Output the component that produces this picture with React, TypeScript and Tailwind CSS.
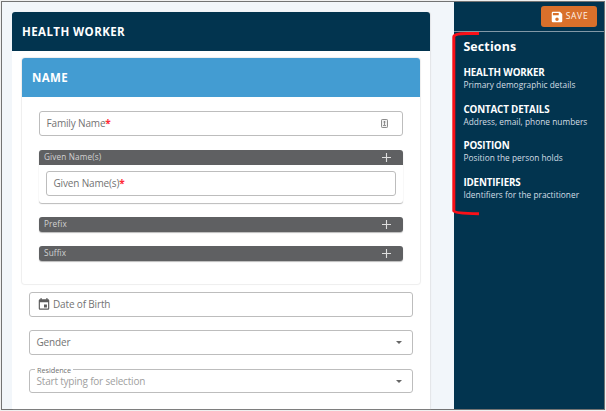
import React from "react";

type FieldProps = {
  label: string;
  required?: boolean;
  leading?: React.ReactNode;
  trailing?: React.ReactNode;
};

function Field({ label, required, leading, trailing }: FieldProps) {
  return (
    <div className="flex h-[25px] items-center rounded-[3px] border border-[#bdbdbd] bg-white px-[6.5px] text-[10px] tracking-[-0.16px] text-[#737373]">
      {leading}
      <span className="whitespace-nowrap">
        {label}
        {required && <span className="font-bold text-[#ff2a35]">*</span>}
      </span>
      {trailing}
    </div>
  );
}

function GroupBar({ label, open }: { label: string; open?: boolean }) {
  return (
    <div
      className={
        "flex h-[15px] items-center justify-between pr-[12px] pl-[5px] text-[8.2px] tracking-[0.15px] text-[#d2d2d2] bg-[#5f6062] " +
        (open ? "rounded-t-[3px]" : "rounded-[3px] shadow-[0_1px_1px_#bbb]")
      }
    >
      <span>{label}</span>
      <svg className="size-[9px]" viewBox="0 0 9 9" stroke="#dedede" strokeWidth="1.1">
        <path d="M4.5 0v9M0 4.5h9" />
      </svg>
    </div>
  );
}

function Caret() {
  return (
    <svg className="mr-[4px] ml-auto h-[3px] w-[6px]" viewBox="0 0 6 3" fill="#666">
      <path d="M0 0h6L3 3z" />
    </svg>
  );
}

function CalendarIcon() {
  return (
    <svg className="mr-[2.5px] size-[14px] -translate-y-[0.5px]" viewBox="0 0 24 24" fill="#5c5c5c">
      <path d="M19 3h-1V1h-2v2H8V1H6v2H5a2 2 0 0 0-2 2v14a2 2 0 0 0 2 2h14a2 2 0 0 0 2-2V5a2 2 0 0 0-2-2zm0 16H5V8h14zM12 12h5v5h-5z" />
    </svg>
  );
}

function ContactIcon() {
  return (
    <svg className="mr-[8px] ml-auto h-[9px] w-[7px]" viewBox="0 0 7 9" fill="none">
      <rect x=".5" y=".5" width="6" height="8" rx=".7" fill="#f2f2f2" stroke="#8c8c8c" />
      <circle cx="3.5" cy="3" r=".9" fill="#777" />
      <path d="M3.5 3v3M2 6.5h3" stroke="#888" strokeWidth=".9" />
    </svg>
  );
}

const sections = [
  { title: "HEALTH WORKER", text: "Primary demographic details" },
  { title: "CONTACT DETAILS", text: "Address, email, phone numbers" },
  { title: "POSITION", text: "Position the person holds" },
  { title: "IDENTIFIERS", text: "Identifiers for the practitioner" },
];

export default function App() {
  return (
    <div className="h-[411px] w-[606px] overflow-hidden bg-[#f0f0f0] pt-px pl-px font-['Open_Sans','Noto_Sans',sans-serif]">
      <div className="relative flex h-[409px] w-[604px] border border-[#737373] bg-[#f2f6fa]">
        <main className="w-[452px] shrink-0 pt-[10px] pl-[10px]">
          <section className="h-[397px] w-[418px] rounded-t-[3px] bg-white shadow-[1px_0_1px_#e3e5e7]">
            <h1 className="flex h-[39px] items-center rounded-t-[3px] bg-[#02344f] pl-[10px] text-[11.5px] font-bold tracking-[0.42px] text-white">
              HEALTH WORKER
            </h1>
            <div className="mx-[10px] mt-[7px] h-[226px] rounded-[3px] bg-white shadow-[0_0_1px_1px_#eeeeee]">
              <h2 className="flex h-[39px] items-center rounded-t-[3px] bg-[#439cd2] pl-[10px] text-[11.5px] font-bold tracking-[0.35px] text-white">
                NAME
              </h2>
              <div className="px-[17px] pt-[14px]">
                <Field label="Family Name" required trailing={<ContactIcon />} />
                <div className="mt-[14px] rounded-[3px] shadow-[0_1px_1px_#bbb]">
                  <GroupBar label="Given Name(s)" open />
                  <div className="px-[7px] pt-[6px] pb-[7px]">
                    <Field label="Given Name(s)" required />
                  </div>
                </div>
                <div className="mt-[14px]">
                  <GroupBar label="Prefix" />
                </div>
                <div className="mt-[14px]">
                  <GroupBar label="Suffix" />
                </div>
              </div>
            </div>
            <div className="px-[17px] pt-[8px]">
              <Field label="Date of Birth" leading={<CalendarIcon />} />
              <div className="mt-[13px]">
                <Field label="Gender" trailing={<Caret />} />
              </div>
              <div className="relative mt-[14px] flex h-[24px] items-center rounded-[3px] border border-[#bdbdbd] px-[6.5px] text-[10px] tracking-[-0.2px] text-[#a0a0a0]">
                <span className="absolute -top-[5px] left-[5px] bg-white px-[2px] text-[7.3px] leading-[10px] tracking-[-0.05px] text-[#707070]">
                  Residence
                </span>
                <span>Start typing for selection</span>
                <Caret />
              </div>
            </div>
          </section>
        </main>
        <aside className="w-[150px] bg-[#02344f] text-white">
          <div className="flex h-[30px] items-start justify-end border-b border-[#8298a6] pt-[4px] pr-[7px]">
            <button className="flex h-[21px] w-[56px] items-center justify-center gap-[2px] rounded-[3px] bg-[#d9702b] text-[8.5px] tracking-[0.7px] text-[#fff3e8]">
              <svg className="size-[14px]" viewBox="0 0 24 24" fill="white">
                <path d="M17 3H5a2 2 0 0 0-2 2v14a2 2 0 0 0 2 2h14a2 2 0 0 0 2-2V7zM12 19a3 3 0 1 1 0-6 3 3 0 0 1 0 6zM15 9H5V5h10z" />
              </svg>
              SAVE
            </button>
          </div>
          <div className="pl-[9.4px]">
            <h2 className="mt-[5px] h-[20px] text-[12.4px] leading-[20px] font-bold tracking-[0.15px]">Sections</h2>
            <ul className="mt-[9px]">
              {sections.map((s) => (
                <li key={s.title} className="h-[36.6px] whitespace-nowrap">
                  <h3 className="text-[9.8px] leading-[13px] font-bold tracking-[-0.15px]">{s.title}</h3>
                  <p className="text-[8.3px] leading-[11px] tracking-[0.03px] text-[#d5dfe5]">{s.text}</p>
                </li>
              ))}
            </ul>
          </div>
        </aside>
        <svg
          className="absolute top-[30px] left-[450px] h-[184px] w-[30px]"
          viewBox="0 0 30 184"
          fill="none"
          stroke="#fa1018"
          strokeWidth="3"
        >
          <path d="M27 1.5H15Q1.8 1.5 1.8 5V179Q2 181.5 27 181.8" />
        </svg>
      </div>
    </div>
  );
}
